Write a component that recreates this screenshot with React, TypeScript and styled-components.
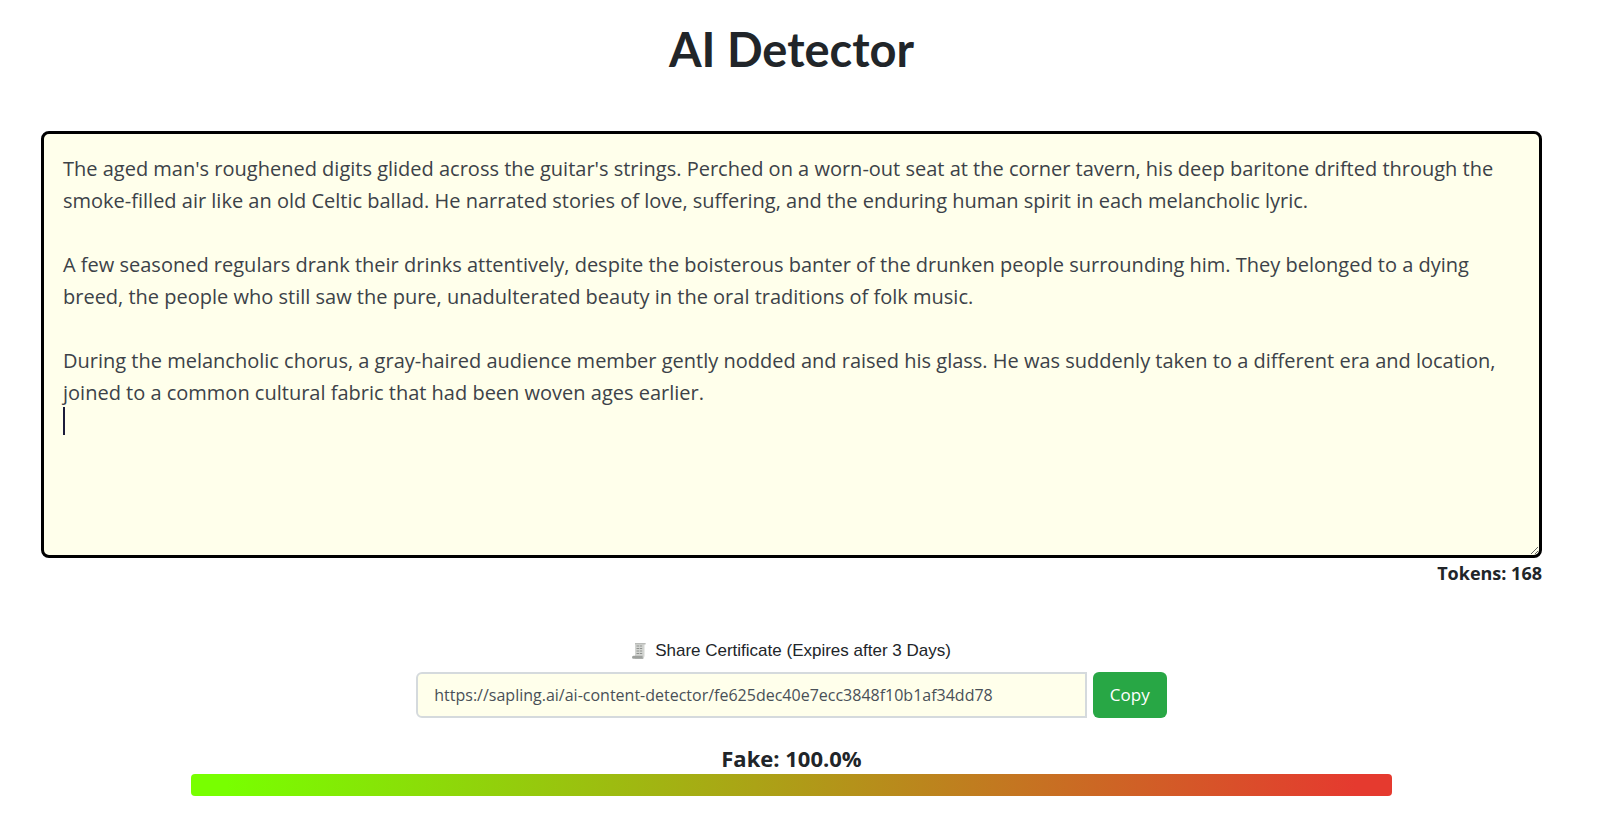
import React, { useState } from "react";
import styled, { createGlobalStyle } from "styled-components";

const GlobalStyle = createGlobalStyle`
  * { box-sizing: border-box; }
  body {
    margin: 0;
    background: #fff;
    color: #212529;
    font-family: "Open Sans", "Noto Sans", sans-serif;
  }
`;

const Page = styled.main`
  padding: 23px 58px 32px 41px;
  display: flex;
  flex-direction: column;
`;

const Title = styled.h1`
  margin: 0 0 56px;
  text-align: center;
  font: 700 47px/52px Lato, sans-serif;
`;

const EditorFrame = styled.div`
  position: relative;
`;

const Editor = styled.textarea`
  display: block;
  width: 100%;
  height: 427px;
  padding: 19px;
  border: 3px solid #000;
  border-radius: 8px;
  background: #ffffeb;
  color: #3c4248;
  caret-color: transparent;
  font: 400 20px/32px "Open Sans", sans-serif;
  resize: vertical;
  outline: 0;
`;

const Caret = styled.span`
  position: absolute;
  top: 276px;
  left: 22px;
  width: 2px;
  height: 28px;
  background: #1c1c3a;
  pointer-events: none;
`;

const Tokens = styled.p`
  margin: 0;
  text-align: right;
  font-weight: 700;
  font-size: 18px;
  line-height: 30px;
`;

const Share = styled.section`
  width: 50%;
  margin: 51px auto 0;
`;

const ShareLabel = styled.label`
  display: flex;
  align-items: center;
  justify-content: center;
  gap: 9px;
  height: 24px;
  margin-bottom: 9px;
  font: 400 17px/24px "Liberation Sans", sans-serif;
`;

const ShareRow = styled.div`
  display: flex;
  gap: 6px;
`;

const LinkInput = styled.input`
  flex: 1;
  min-width: 0;
  height: 46px;
  padding: 0 16px;
  border: 2px solid #d5dadd;
  border-radius: 6px 0 0 6px;
  background: #ffffeb;
  color: #495057;
  font: 400 16px/24px "Open Sans", sans-serif;
  outline: 0;
`;

const CopyButton = styled.button`
  width: 74px;
  height: 46px;
  padding: 0;
  border: 0;
  border-radius: 6px;
  background: #28a745;
  color: #fff;
  font: 400 17px/24px "Open Sans", sans-serif;
  cursor: pointer;
`;

const Result = styled.section`
  width: 80%;
  margin: 24px auto 0;
`;

const Score = styled.p`
  margin: 0;
  text-align: center;
  font-weight: 700;
  font-size: 22px;
  line-height: 32px;
`;

const Meter = styled.div`
  height: 22px;
  border-radius: 4px;
  background: linear-gradient(to right, #78ff00 3%, #e53a2f 97%);
`;

const Scroll = () => (
  <svg width="14" height="18" viewBox="0 0 14 18" aria-hidden="true">
    <path d="M3 1h10.5v1.5H12.5V14a3 3 0 0 1-2.500 3H3z" fill="#d3d5d2" />
    <path d="M3 1h10.500v1.300H3z" fill="#b9bbb8" />
    <path d="M4.500 4h6M4.500 6.500h6M4.500 9h6M4.500 11.500h6" stroke="#8e918e" strokeDasharray="2.500 .7" />
    <path d="M1.500 13.800h9.300c-.6 1 0 2.400 1 3H1.500a1.500 1.500 0 0 1 0-3z" fill="#9ea19e" />
  </svg>
);

const initialText = `The aged man's roughened digits glided across the guitar's strings. Perched on a worn-out seat at the corner tavern, his deep baritone drifted through the smoke-filled air like an old Celtic ballad. He narrated stories of love, suffering, and the enduring human spirit in each melancholic lyric.

A few seasoned regulars drank their drinks attentively, despite the boisterous banter of the drunken people surrounding him. They belonged to a dying breed, the people who still saw the pure, unadulterated beauty in the oral traditions of folk music.

During the melancholic chorus, a gray-haired audience member gently nodded and raised his glass. He was suddenly taken to a different era and location, joined to a common cultural fabric that had been woven ages earlier.
`;

const shareUrl = "https://sapling.ai/ai-content-detector/fe625dec40e7ecc3848f10b1af34dd78";

export default function App() {
  const [value, setValue] = useState(initialText);
  return (
    <>
      <GlobalStyle />
      <Page>
        <Title>AI Detector</Title>
        <EditorFrame>
          <Editor aria-label="Text to check" spellCheck={false} value={value} onChange={(e) => setValue(e.target.value)} />
          <Caret />
        </EditorFrame>
        <Tokens>Tokens: 168</Tokens>
        <Share>
          <ShareLabel htmlFor="share-link">
            <Scroll />
            Share Certificate (Expires after 3 Days)
          </ShareLabel>
          <ShareRow>
            <LinkInput id="share-link" type="text" readOnly value={shareUrl} />
            <CopyButton type="button" onClick={() => navigator.clipboard?.writeText(shareUrl)}>Copy</CopyButton>
          </ShareRow>
        </Share>
        <Result>
          <Score>Fake: 100.0%</Score>
          <Meter role="img" aria-label="Fake: 100.0%" />
        </Result>
      </Page>
    </>
  );
}
